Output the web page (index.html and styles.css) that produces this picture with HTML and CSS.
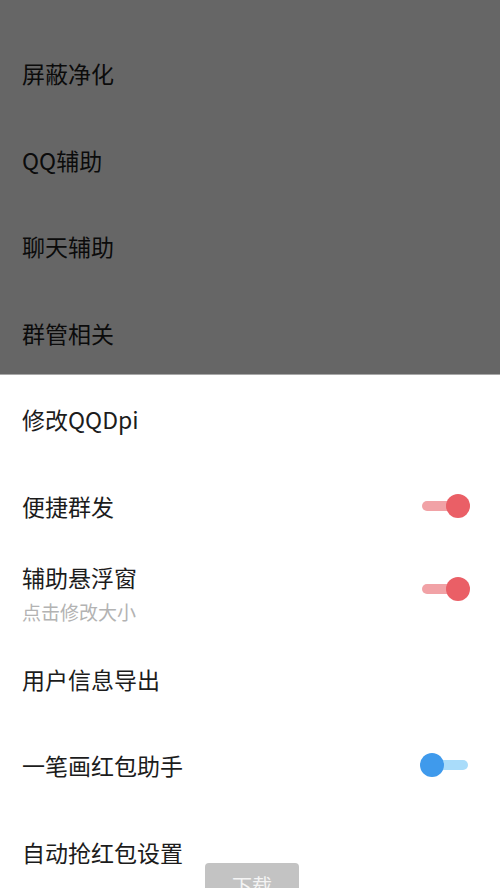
FILE: index.html
```html
<!DOCTYPE html>
<html lang="zh">
<head>
<meta charset="utf-8">
<link rel="stylesheet" href="styles.css">
</head>
<body>
<div class="screen">
  <ul class="list">
    <li class="row"><span class="title">屏蔽净化</span></li>
    <li class="row"><span class="title">QQ辅助</span></li>
    <li class="row"><span class="title">聊天辅助</span></li>
    <li class="row"><span class="title">群管相关</span></li>
    <li class="row"><span class="title">修改QQDpi</span></li>
    <li class="row"><span class="title">便捷群发</span><span class="switch on"><span class="track"></span><span class="thumb"></span></span></li>
    <li class="row">
      <div class="texts"><span class="title">辅助悬浮窗</span><span class="sub">点击修改大小</span></div>
      <span class="switch on"><span class="track"></span><span class="thumb"></span></span>
    </li>
    <li class="row"><span class="title">用户信息导出</span></li>
    <li class="row"><span class="title">一笔画红包助手</span><span class="switch off"><span class="track"></span><span class="thumb"></span></span></li>
    <li class="row"><span class="title">自动抢红包设置</span></li>
  </ul>
  <div class="dim"></div>
  <div class="download">下载</div>
</div>
</body>
</html>
```
FILE: styles.css
```css
html, body {
  margin: 0;
  padding: 0;
  background: #ffffff;
}
body {
  font-family: "Noto Sans CJK SC", "Noto Sans", sans-serif;
  color: #1c1c1c;
}
.screen {
  position: relative;
  width: 500px;
  height: 888px;
  overflow: hidden;
  background: #ffffff;
}
.list {
  list-style: none;
  margin: 0;
  padding: 30px 0 0 0;
}
.row {
  height: 86.5px;
  display: flex;
  align-items: center;
  justify-content: space-between;
  padding: 0 30px 0 22px;
  box-sizing: border-box;
}
.title {
  font-size: 23px;
  line-height: 30px;
}
.texts {
  display: flex;
  flex-direction: column;
  gap: 7px;
  margin-top: 2px;
}
.sub {
  font-size: 19px;
  line-height: 26px;
  color: #b3b3b3;
}
.switch {
  position: relative;
  width: 50px;
  height: 24px;
  display: flex;
  align-items: center;
}
.track {
  width: 46px;
  height: 10px;
  border-radius: 5px;
  margin-left: 2px;
}
.thumb {
  position: absolute;
  top: 0;
  width: 24px;
  height: 24px;
  border-radius: 50%;
}
.switch.on .track { background: #f1a2a6; }
.switch.on .thumb { right: 0; background: #ea5f66; }
.switch.off .track { background: #a9dcfa; }
.switch.off .thumb { left: 0; background: #3f9aec; }
.row:nth-child(7) .switch { margin-top: -6px; }
.dim {
  position: absolute;
  left: 0;
  top: 0;
  width: 500px;
  height: 374px;
  background: rgba(0, 0, 0, 0.6);
  border-bottom: 1px solid #a8a8a8;
}
.download {
  position: absolute;
  left: 205px;
  top: 863px;
  width: 94px;
  height: 30px;
  background: #c3c3c3;
  border-radius: 4px 4px 0 0;
  color: #f4f4f4;
  font-size: 20px;
  line-height: 30px;
  text-align: center;
  padding-top: 8px;
  box-sizing: border-box;
}
```
